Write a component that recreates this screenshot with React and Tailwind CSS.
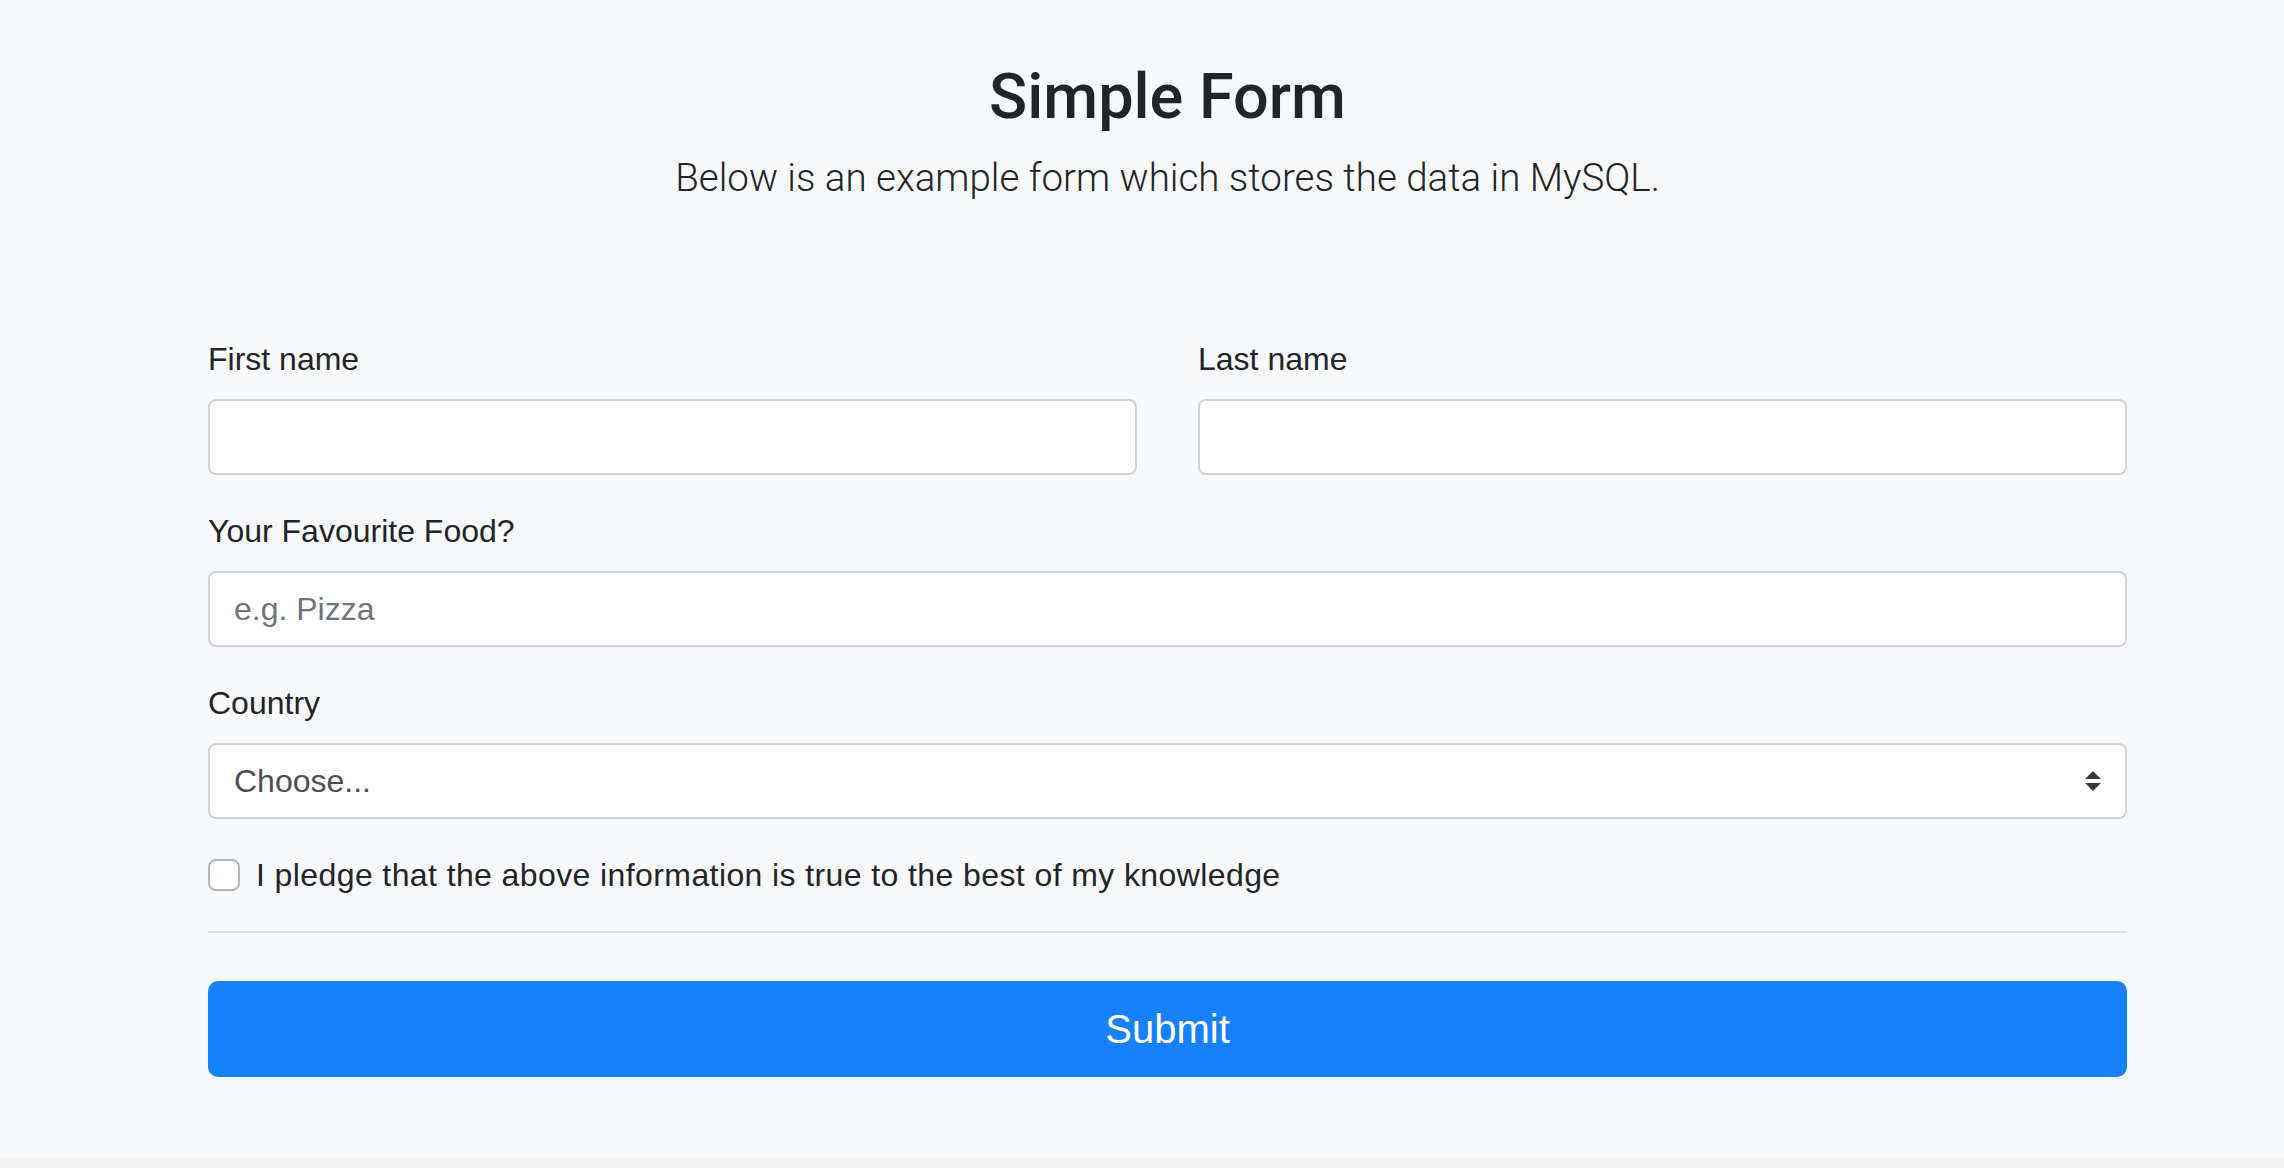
import { useState } from "react";

const SelectArrow = () => (
  <svg width="16" height="20" viewBox="0 0 4 5" className="pointer-events-none">
    <path fill="#343a40" d="M2 0L0 2h4zm0 5L0 3h4z" />
  </svg>
);

const Field = ({ label, children, className = "" }) => (
  <div className={`mb-8 ${className}`}>
    <label className="block text-[32px] leading-[48px] mb-4 text-[#212529]">{label}</label>
    {children}
  </div>
);

const inputCls =
  "block w-full h-[76px] px-[24px] bg-white border-2 border-[#ced4da] rounded-lg text-[32px] text-[#495057] placeholder:text-[#6c757d] outline-none";

const App = () => {
  const [form, setForm] = useState({ first: "", last: "", food: "", country: "", pledge: false });

  const update = (key) => (e) =>
    setForm({ ...form, [key]: e.target.type === "checkbox" ? e.target.checked : e.target.value });

  return (
    <div className="bg-[#f3f3f3] h-[1168px] font-['Liberation_Sans',Arial,sans-serif]">
      <div className="bg-[#f8f9fa] h-[1158px] pl-[208px] pr-[157px] pt-[60px]">
        <div className="text-center text-[#212529] font-['Roboto',sans-serif]">
          <h2 className="text-[63px] leading-[74px] font-medium">Simple Form</h2>
          <p className="mt-[14px] text-[38.5px] leading-[60px] font-light">
            Below is an example form which stores the data in MySQL.
          </p>
        </div>

        <form className="mt-[127px]" onSubmit={(e) => e.preventDefault()}>
          <div className="grid grid-cols-2 gap-x-[61px]">
            <Field label="First name" className="!mb-0">
              <input className={inputCls} value={form.first} onChange={update("first")} />
            </Field>
            <Field label="Last name" className="!mb-0">
              <input className={inputCls} value={form.last} onChange={update("last")} />
            </Field>
          </div>
          <div className="h-8" />

          <Field label="Your Favourite Food?">
            <input
              className={inputCls}
              placeholder="e.g. Pizza"
              value={form.food}
              onChange={update("food")}
            />
          </Field>

          <Field label="Country">
            <div className="relative">
              <select
                className={`${inputCls} appearance-none pr-16`}
                value={form.country}
                onChange={update("country")}
              >
                <option value="">Choose...</option>
                <option>United Kingdom</option>
                <option>United States</option>
              </select>
              <div className="absolute right-[26px] top-1/2 -translate-y-1/2 flex">
                <SelectArrow />
              </div>
            </div>
          </Field>

          <label className="flex items-center h-[48px] text-[32px] text-[#212529] tracking-[0.4px]">
            <input
              type="checkbox"
              checked={form.pledge}
              onChange={update("pledge")}
              className="appearance-none w-[32px] h-[32px] mr-4 bg-white border-2 border-[#adb5bd] rounded-lg shrink-0"
            />
            I pledge that the above information is true to the best of my knowledge
          </label>

          <hr className="mt-8 mb-12 border-0 border-t-2 border-[#dfe0e1]" />

          <button
            type="submit"
            className="w-full h-[96px] rounded-[10px] bg-[#1780fc] text-white text-[40px]"
          >
            Submit
          </button>
        </form>
      </div>
    </div>
  );
};

export default App;
